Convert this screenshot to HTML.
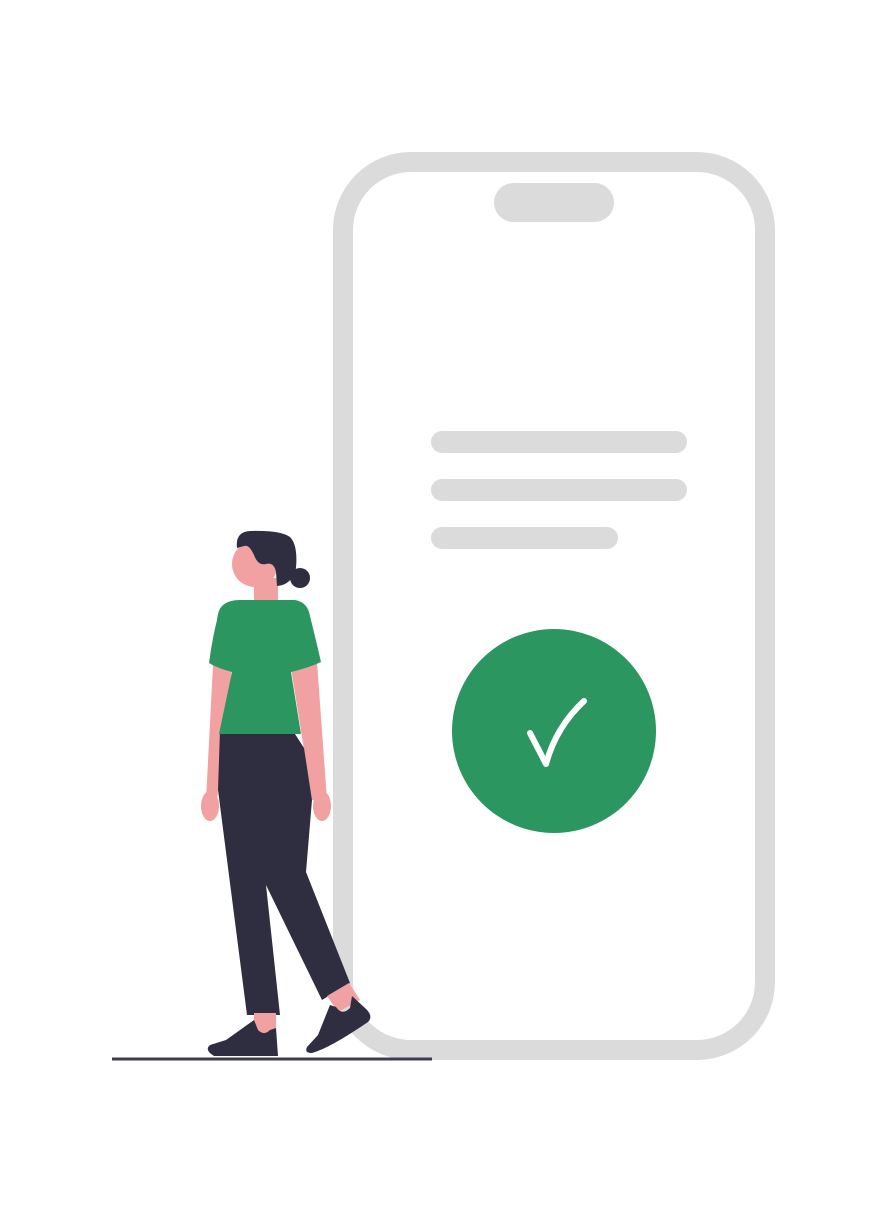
<!DOCTYPE html>
<html><head><style>html,body{margin:0;padding:0;background:#fff}svg{display:block}</style></head>
<body>
<svg width="887" height="1214" viewBox="0 0 887 1214" xmlns="http://www.w3.org/2000/svg">
<rect x="343" y="162" width="422" height="888" rx="68" fill="none" stroke="#dbdbdc" stroke-width="20"/>
<rect x="494" y="183" width="120" height="39" rx="19.5" fill="#dbdbdc"/>
<rect x="431" y="431" width="256" height="22" rx="11" fill="#dbdbdc"/>
<rect x="431" y="479" width="256" height="22" rx="11" fill="#dbdbdc"/>
<rect x="431" y="527" width="187" height="22" rx="11" fill="#dbdbdc"/>
<circle cx="554" cy="731" r="102" fill="#2c9660"/>
<path d="M530 733 L546 764 Q556 727 584 701" fill="none" stroke="#fff" stroke-width="6" stroke-linecap="round" stroke-linejoin="round"/>
<line x1="112" y1="1059" x2="432" y2="1059" stroke="#3f3d56" stroke-width="3"/>
<!-- person -->
<rect x="254" y="578" width="24" height="26" fill="#f2a1a3"/>
<circle cx="255" cy="564" r="23" fill="#f2a1a3"/>
<path d="M237 548 Q235 532 250 531 Q280 530 290 537 Q298 545 296 568 Q292 585 277 586 L276 572 Q274 562 266 564 Q258 566 254 555 Q249 544 244 546 Z" fill="#2f2e41"/>
<circle cx="300" cy="578" r="10" fill="#2f2e41"/>
<path d="M213 665 L206 800 L217 800 L232 668 Z" fill="#f2a1a3"/>
<path d="M291 668 L312 800 L327 800 L317 662 Z" fill="#f2a1a3"/>
<ellipse cx="210" cy="806" rx="9" ry="15" fill="#f2a1a3"/>
<ellipse cx="322" cy="806" rx="9" ry="15" fill="#f2a1a3"/>
<path d="M220 730 L218 790 L247 1015 L280 1015 L266 885 L322 1000 L350 983 L306 872 L312 800 L304 748 L295 734 Z" fill="#2f2e41"/>
<path d="M254 1013 L276 1013 L276 1040 L254 1040 Z" fill="#f2a1a3"/>
<path d="M327 996 L349 983 L360 1000 L338 1012 Z" fill="#f2a1a3"/>
<path d="M254 1020 L226 1040 L210 1045 Q204 1050 214 1056 L278 1056 L276 1028 L270 1030 Q264 1036 258 1030 Z" fill="#2f2e41"/>
<path d="M330 1005 L318 1035 L307 1047 Q304 1053 312 1053 Q330 1048 368 1022 Q374 1016 365 1008 L352 996 L350 1008 Q342 1016 336 1007 Z" fill="#2f2e41"/>
<path d="M222 606 Q228 600 240 600 L295 600 Q306 602 309 612 Q316 640 321 662 Q308 668 291 672 L301 734 L219 734 L232 672 Q217 668 209 663 Q212 640 217 620 Q218 610 222 606 Z" fill="#2c9660"/>
</svg>
</body></html>
